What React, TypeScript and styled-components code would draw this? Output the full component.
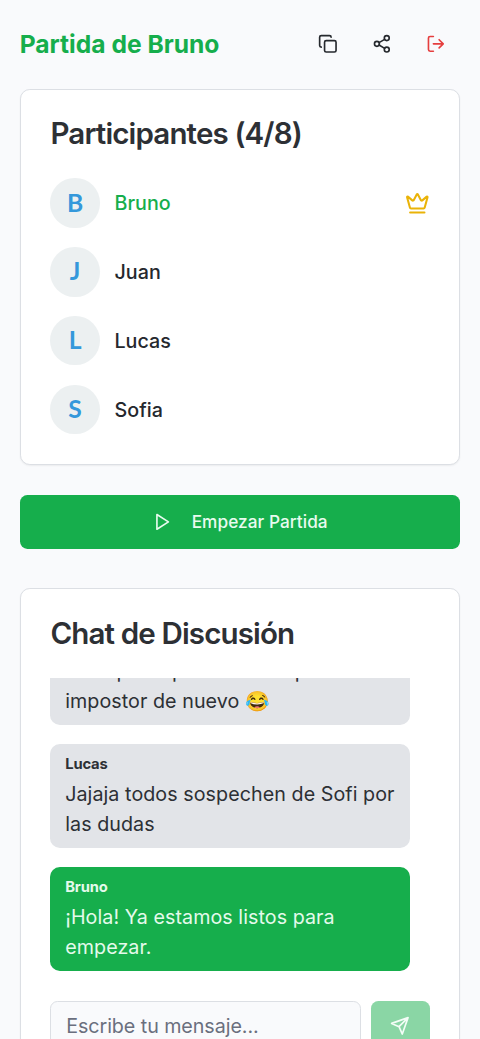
import React from 'react';
import styled, { createGlobalStyle } from 'styled-components';

const GlobalStyle = createGlobalStyle`
  *, *::before, *::after { box-sizing: border-box; }
  html { font-size: 19.692px; }
  body {
    margin: 0;
    background: #f9fafc;
    color: #25282d;
    font-family: Inter, 'Liberation Sans', 'Noto Color Emoji', sans-serif;
    font-size: 1rem;
    line-height: 1.5;
    letter-spacing: 0.003em;
  }
  h1, h2, p { margin: 0; }
  button, input { font: inherit; letter-spacing: inherit; }
`;

const Page = styled.main`
  display: flex;
  flex-direction: column;
  height: 100vh;
  padding: 1rem 1rem 0;
  overflow: hidden;
`;

const Header = styled.header`
  display: flex;
  flex: none;
  align-items: center;
  justify-content: space-between;
  height: 2.5rem;
  margin-bottom: 1rem;
`;

const RoomName = styled.h1`
  color: #16ae4c;
  font-size: 1.25rem;
  font-weight: 700;
  line-height: 1.75rem;
  letter-spacing: 0;
`;

const Actions = styled.div`
  display: flex;
  gap: 0.25rem;
`;

const IconButton = styled.button<{ $danger?: boolean }>`
  display: flex;
  align-items: center;
  justify-content: center;
  width: 2.5rem;
  height: 2.5rem;
  padding: 0;
  border: 0;
  background: none;
  color: ${(p) => (p.$danger ? '#e53e3e' : '#25282d')};
`;

const Card = styled.section`
  flex: none;
  padding: 1.51rem;
  border: 1px solid #dcdfe4;
  border-radius: 0.5rem;
  background: #fff;
  box-shadow: 0 1px 2px rgba(0, 0, 0, 0.06);
`;

const CardTitle = styled.h2`
  margin-bottom: 1.5rem;
  color: #2d3035;
  font-size: 1.5rem;
  font-weight: 600;
  line-height: 1;
  letter-spacing: -0.029em;
`;

const PlayerList = styled.div`
  display: flex;
  flex-direction: column;
  gap: 1rem;
`;

const PlayerRow = styled.div`
  display: flex;
  align-items: center;
  gap: 0.75rem;
`;

const Avatar = styled.div`
  display: flex;
  align-items: center;
  justify-content: center;
  width: 2.5rem;
  height: 2.5rem;
  border-radius: 50%;
  background: #ecf0f1;
  color: #3498db;
  font-family: Lato, sans-serif;
  font-size: 1.25rem;
  font-weight: 700;
  letter-spacing: 0;
`;

const PlayerName = styled.span<{ $self?: boolean }>`
  flex: 1;
  padding-top: 2px;
  color: ${(p) => (p.$self ? '#16ae4c' : '#25282d')};
  font-weight: 500;
`;

const StartButton = styled.button`
  display: flex;
  flex: none;
  align-items: center;
  justify-content: center;
  gap: 1rem;
  height: 2.75rem;
  margin: 1.5rem 0 2rem;
  border: 0;
  border-radius: 0.375rem;
  background: #16ae4c;
  color: #e9fbef;
  font-size: 0.875rem;
  font-weight: 500;
`;

const Messages = styled.div`
  display: flex;
  flex-direction: column;
  justify-content: flex-end;
  gap: 1rem;
  height: 14.87rem;
  overflow: hidden;
`;

const Bubble = styled.article<{ $own?: boolean }>`
  flex: none;
  width: 18.25rem;
  padding: 0.53rem 0.7rem 0.44rem 0.75rem;
  border-radius: 0.5rem;
  background: ${(p) => (p.$own ? '#16ae4c' : '#e2e4e8')};
  color: ${(p) => (p.$own ? '#e4faeb' : '#2d3035')};
`;

const Author = styled.p`
  margin-bottom: 0.28rem;
  font-size: 0.75rem;
  font-weight: 700;
  line-height: 1rem;
  letter-spacing: -0.01em;
`;

const Composer = styled.form`
  display: flex;
  gap: 0.5rem;
  margin-top: 1.53rem;
`;

const MessageInput = styled.input`
  flex: 1;
  min-width: 0;
  height: 2.5rem;
  padding: 0.52rem 0.75rem 0.48rem;
  border: 1px solid #dcdfe4;
  border-radius: 0.375rem;
  background: #f9fafc;
  letter-spacing: -0.003em;
  &::placeholder { color: #6a6f7e; opacity: 1; }
`;

const SendButton = styled.button`
  display: flex;
  align-items: center;
  justify-content: center;
  width: 3rem;
  height: 2.5rem;
  padding: 0;
  border: 0;
  border-radius: 0.375rem;
  background: #8ad6a5;
  color: #f4fdf7;
`;

const Svg = styled.svg<{ $size?: number }>`
  flex: none;
  width: ${(p) => p.$size ?? 1}rem;
  height: ${(p) => p.$size ?? 1}rem;
  fill: none;
  stroke: currentColor;
  stroke-width: 2;
  stroke-linecap: round;
  stroke-linejoin: round;
`;

const Crown = styled(Svg)`
  color: #eab308;
`;

const players = ['Bruno', 'Juan', 'Lucas', 'Sofia'];

const messages = [
  { author: 'Sofia', text: 'Yo espero que no me toque ser el impostor de nuevo 😂' },
  { author: 'Lucas', text: 'Jajaja todos sospechen de Sofi por las dudas' },
  { author: 'Bruno', text: '¡Hola! Ya estamos listos para empezar.' },
];

export default function App() {
  return (
    <>
      <GlobalStyle />
      <Page>
        <Header>
          <RoomName>Partida de Bruno</RoomName>
          <Actions>
            <IconButton aria-label="Copiar">
              <Svg viewBox="0 0 24 24">
                <rect width="14" height="14" x="8" y="8" rx="2" />
                <path d="M4 16c-1.1 0-2-.9-2-2V4c0-1.1.9-2 2-2h10c1.1 0 2 .9 2 2" />
              </Svg>
            </IconButton>
            <IconButton aria-label="Compartir">
              <Svg viewBox="0 0 24 24">
                <circle cx="18" cy="5" r="3" />
                <circle cx="6" cy="12" r="3" />
                <circle cx="18" cy="19" r="3" />
                <path d="m8.59 13.51 6.83 3.98M15.41 6.51l-6.82 3.98" />
              </Svg>
            </IconButton>
            <IconButton $danger aria-label="Salir">
              <Svg viewBox="0 0 24 24">
                <path d="M9 21H5a2 2 0 0 1-2-2V5a2 2 0 0 1 2-2h4" />
                <path d="m16 17 5-5-5-5M21 12H9" />
              </Svg>
            </IconButton>
          </Actions>
        </Header>

        <Card>
          <CardTitle>Participantes (4/8)</CardTitle>
          <PlayerList>
            {players.map((name, i) => (
              <PlayerRow key={name}>
                <Avatar>{name[0]}</Avatar>
                <PlayerName $self={i === 0}>{name}</PlayerName>
                {i === 0 && (
                  <Crown $size={1.25} viewBox="0 0 24 24">
                    <path d="M11.562 3.266a.5.5 0 0 1 .876 0L15.39 8.87a1 1 0 0 0 1.516.294L21.183 5.5a.5.5 0 0 1 .798.519l-2.834 10.246a1 1 0 0 1-.956.734H5.81a1 1 0 0 1-.957-.734L2.02 6.02a.5.5 0 0 1 .798-.519l4.276 3.664a1 1 0 0 0 1.516-.294z" />
                    <path d="M5 21h14" />
                  </Crown>
                )}
              </PlayerRow>
            ))}
          </PlayerList>
        </Card>

        <StartButton>
          <Svg viewBox="0 0 24 24">
            <path d="m6 3 14 9-14 9z" />
          </Svg>
          Empezar Partida
        </StartButton>

        <Card>
          <CardTitle>Chat de Discusión</CardTitle>
          <Messages>
            {messages.map((m) => (
              <Bubble key={m.author} $own={m.author === 'Bruno'}>
                <Author>{m.author}</Author>
                <p>{m.text}</p>
              </Bubble>
            ))}
          </Messages>
          <Composer>
            <MessageInput placeholder="Escribe tu mensaje..." />
            <SendButton type="button" aria-label="Enviar">
              <Svg viewBox="0 0 24 24">
                <path d="m22 2-7 20-4-9-9-4ZM22 2 11 13" />
              </Svg>
            </SendButton>
          </Composer>
        </Card>
      </Page>
    </>
  );
}
